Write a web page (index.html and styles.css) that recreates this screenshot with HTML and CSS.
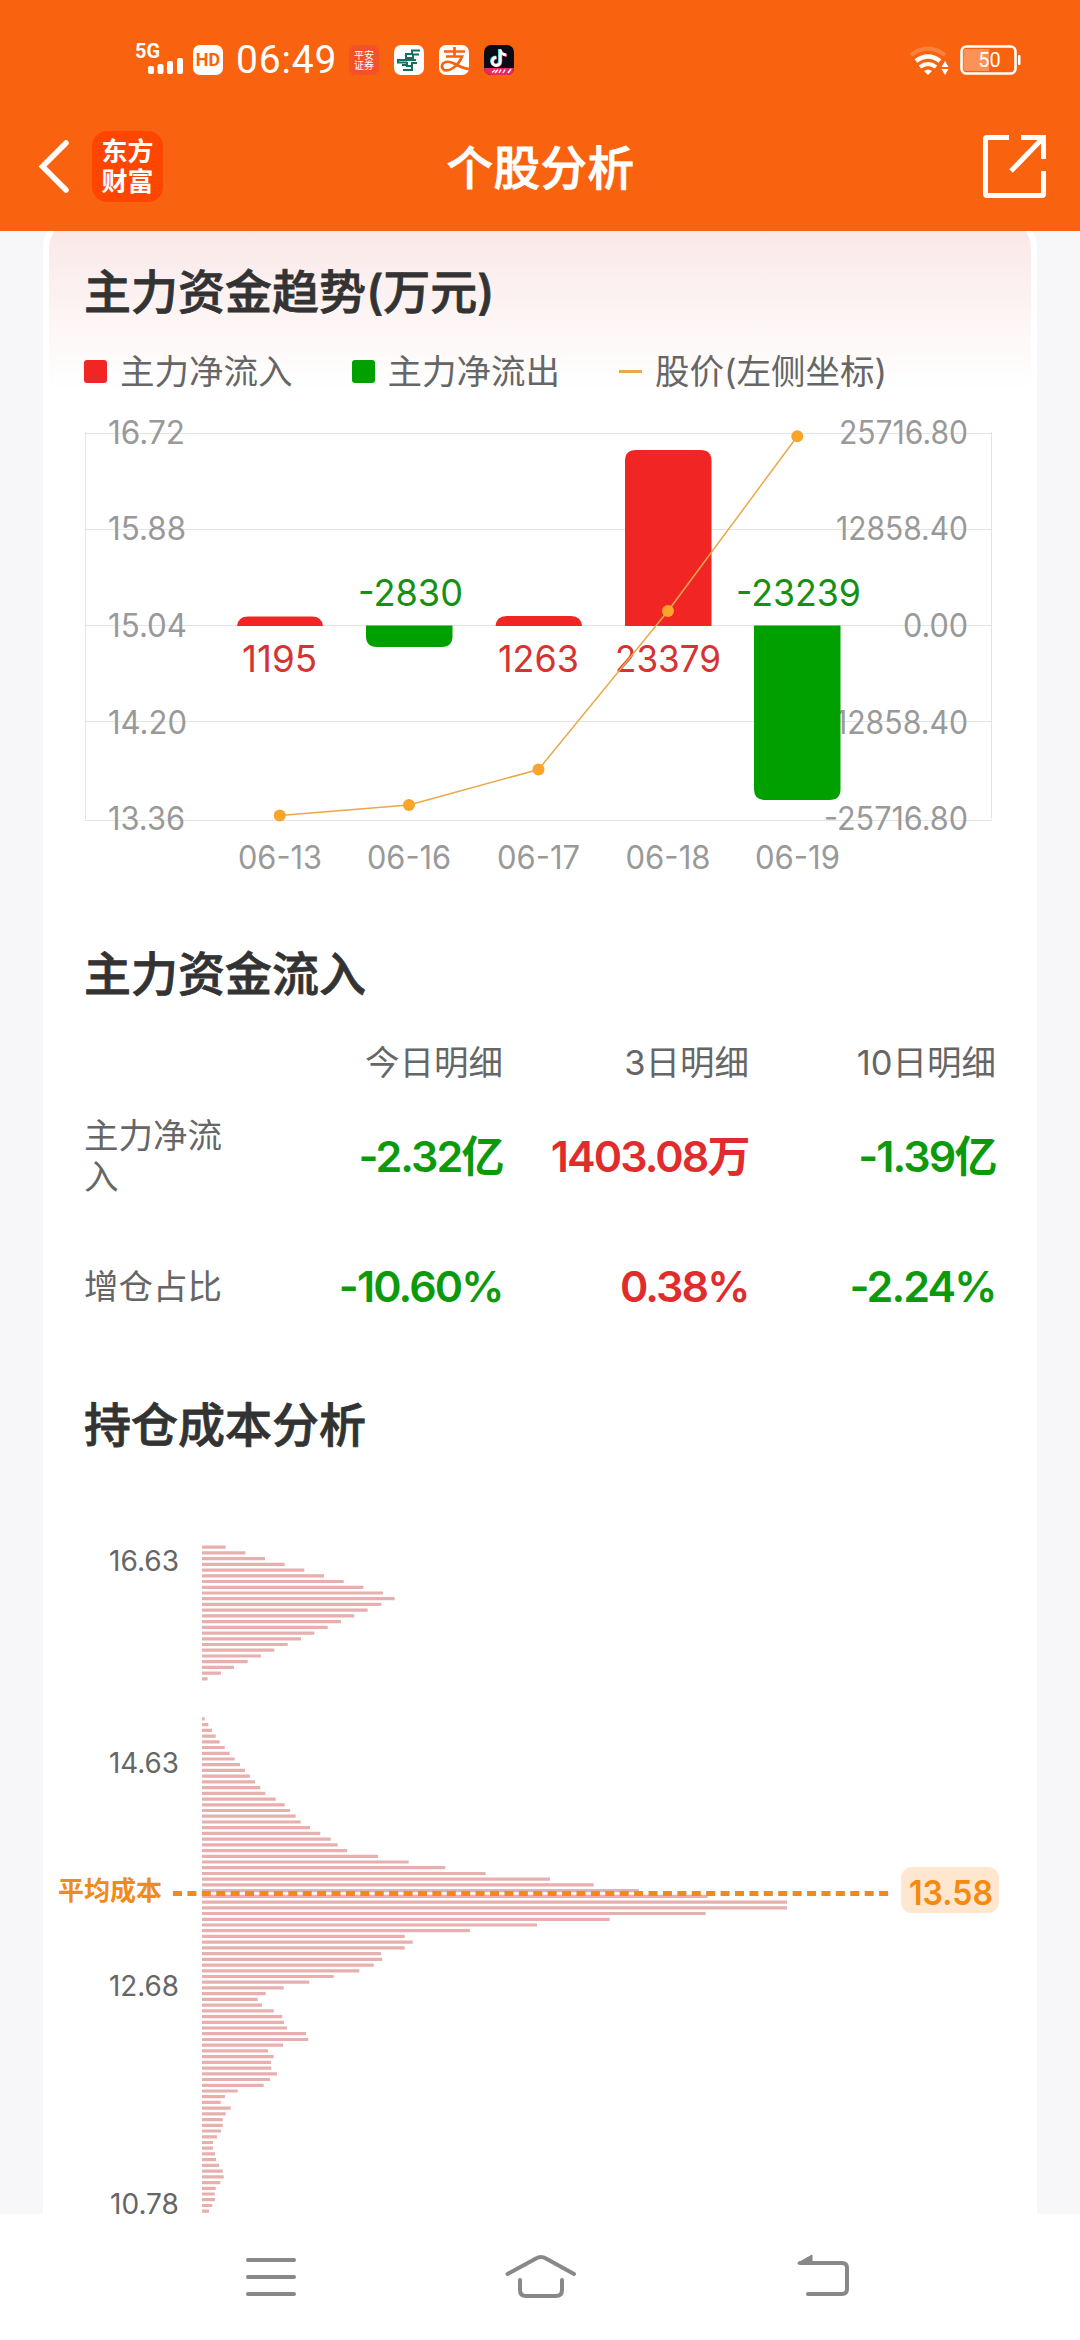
FILE: index.html
```html
<!DOCTYPE html>
<html lang="zh-CN">
<head>
<meta charset="utf-8">
<title>个股分析</title>
<link rel="stylesheet" href="styles.css">
</head>
<body>
<div class="screen">
  <header class="top">
    <div class="status">
      <svg class="signal" width="49" height="38" viewBox="135 40 49 38">
        <text class="net" x="135" y="58" textLength="25" lengthAdjust="spacingAndGlyphs">5G</text>
        <rect x="148" y="66" width="6" height="8" rx="2"/><rect x="157.500" y="64" width="6" height="10" rx="2"/>
        <rect x="167" y="61" width="6" height="13" rx="2"/><rect x="177" y="58" width="6" height="16" rx="2"/>
      </svg>
      <span class="hd">HD</span>
      <span class="clock">06:49</span>
      <span class="app pingan">平安<br>证券</span>
      <svg class="app" viewBox="0 0 30 30">
        <rect width="30" height="30" rx="7" fill="#fff"/>
        <path d="M26 5.500H18V9H12v4M25 9.500h-6V13h-8M22 15H4v2.500h9M23 18h-5v3h-5v-4M13 20H8M18 22v3H9" fill="none" stroke="#14715c" stroke-width="2"/>
      </svg>
      <svg class="app" viewBox="0 0 30 30">
        <rect width="30" height="30" rx="7" fill="#fff"/>
        <path d="M5 6.500H26M15.500 2V11.500M7 11.500H23Q20 19 14 23Q9 26.500 5 25Q1.500 22 4 18.500Q8 15 15 18.500Q23 23 30 24" fill="none" stroke="#f96310" stroke-width="2.700"/>
      </svg>
      <svg class="app" viewBox="0 0 30 30">
        <rect width="30" height="30" rx="7" fill="#0b0b16"/>
        <path d="M0 23H30A7 7 0 0 1 23 30H7A7 7 0 0 1 0 23Z" fill="#e8285e"/>
        <path d="M15.500 4v12a4 4 0 1 1-4-4M15.500 5q1 4 6 4.500" fill="none" stroke="#45d9d5" stroke-width="3"/>
        <path d="M17 5v12a4 4 0 1 1-4-4M17 6q1 4 6 4.500" fill="none" stroke="#f0385f" stroke-width="2.500"/>
        <path d="M16.300 4.500v12a4 4 0 1 1-4-4M16.300 5.500q1 4 6 4.500" fill="none" stroke="#fff" stroke-width="2.800"/>
        <path d="M8 27.500l3-2.500M11 28l3-3.500M15 28l2-3.500M19 28l2-3.500M24 28l3-4" stroke="#fff" stroke-width="1.500"/>
      </svg>
      <svg class="system" width="112" height="32" viewBox="909 44 112 32">
        <g fill="none" stroke="#fff">
          <path d="M911 55Q928 42 945 55" stroke-width="4" opacity=".2"/>
          <path d="M916 61Q928 52 940 61" stroke-width="4.500"/>
          <path d="M920 67Q928 61 936 67" stroke-width="4"/>
          <rect x="961.500" y="46.500" width="54" height="27" rx="5" stroke-width="2.600"/>
        </g>
        <g fill="#fff">
          <path d="M924 71Q928 68 932 71L928 75Z"/><path d="M941.500 67L945 61L948.500 67ZM941.500 69H948.500L945 75Z"/>
          <rect x="1018" y="55" width="2.500" height="10" rx="1"/>
          <path d="M965 49H989V71H965Q963.500 71 963.500 69V51Q963.500 49 965 49Z" opacity=".3"/>
          <text class="level" x="989.500" y="67" text-anchor="middle">50</text>
        </g>
      </svg>
    </div>
    <div class="titlebar">
      <svg class="back" width="30" height="56" viewBox="39 139 30 56"><path d="M66 143L42.500 166.500L66 190" /></svg>
      <span class="logo">东方<br>财富</span>
      <h1>个股分析</h1>
      <svg class="share" width="64" height="64" viewBox="983 134 64 64"><path d="M1009 136.500H987Q985.500 136.500 985.500 138V193Q985.500 194.500 987 194.500H1042Q1043.500 194.500 1043.500 193V170M1021 136.500H1043.500V158M1043 137L1011 170"/></svg>
    </div>
  </header>

  <main class="content">
    <div class="card">
      <div class="card-body">
        <h2 class="first">主力资金趋势(万元)</h2>
        <div class="legend">
          <span class="key"><i class="box in"></i>主力净流入</span>
          <span class="key"><i class="box out"></i>主力净流出</span>
          <span class="key"><i class="dash"></i>股价(左侧坐标)</span>
        </div>
        <svg class="trend" width="912" height="490" viewBox="84 400 912 490">
          <path class="grid" d="M85 433.500H992M85 529.500H992M85 625.500H992M85 721.500H992M85 820.500H992M85.500 432V819M991.500 432V819"/>
          <g class="axis">
            <text x="108" y="444" textLength="77" lengthAdjust="spacingAndGlyphs">16.72</text>
            <text x="108" y="540" textLength="78" lengthAdjust="spacingAndGlyphs">15.88</text>
            <text x="108" y="637" textLength="79" lengthAdjust="spacingAndGlyphs">15.04</text>
            <text x="108" y="733.500" textLength="79" lengthAdjust="spacingAndGlyphs">14.20</text>
            <text x="108" y="830" textLength="77" lengthAdjust="spacingAndGlyphs">13.36</text>
            <text x="839" y="444" textLength="129" lengthAdjust="spacingAndGlyphs">25716.80</text>
            <text x="836" y="540" textLength="132" lengthAdjust="spacingAndGlyphs">12858.40</text>
            <text x="903" y="637" textLength="65" lengthAdjust="spacingAndGlyphs">0.00</text>
            <text x="821" y="733.500" textLength="147" lengthAdjust="spacingAndGlyphs">-12858.40</text>
            <text x="824" y="830" textLength="144" lengthAdjust="spacingAndGlyphs">-25716.80</text>
            <text x="238" y="869" textLength="84" lengthAdjust="spacingAndGlyphs">06-13</text>
            <text x="367" y="869" textLength="84" lengthAdjust="spacingAndGlyphs">06-16</text>
            <text x="497" y="869" textLength="83" lengthAdjust="spacingAndGlyphs">06-17</text>
            <text x="625.500" y="869" textLength="85" lengthAdjust="spacingAndGlyphs">06-18</text>
            <text x="755" y="869" textLength="85" lengthAdjust="spacingAndGlyphs">06-19</text>
          </g>
          <g class="in">
            <path d="M237 626Q238 616.500 248 616.500H312Q322 616.500 323 626Z"/>
            <path d="M495.500 626Q496.500 616 506.500 616H571Q581 616 582 626Z"/>
            <path d="M625 626V461Q625 450 636 450H700.500Q711.500 450 711.500 461V626Z"/>
            <text x="242" y="672" textLength="75" lengthAdjust="spacingAndGlyphs">1195</text>
            <text x="498" y="672" textLength="81" lengthAdjust="spacingAndGlyphs">1263</text>
            <text x="615" y="672" textLength="106" lengthAdjust="spacingAndGlyphs">23379</text>
          </g>
          <g class="out">
            <path d="M366 625.500V636Q366 647 377 647H441.500Q452.500 647 452.500 636V625.500Z"/>
            <path d="M754 625.500V789Q754 800 765 800H829.500Q840.500 800 840.500 789V625.500Z"/>
            <text x="358" y="606" textLength="105" lengthAdjust="spacingAndGlyphs">-2830</text>
            <text x="736" y="606" textLength="125" lengthAdjust="spacingAndGlyphs">-23239</text>
          </g>
          <polyline class="price" points="279.700,815.500 409,805 538.500,769.500 668,611 797.300,436.300"/>
          <g class="dots"><circle cx="279.700" cy="815.500" r="6"/><circle cx="409" cy="805" r="6"/><circle cx="538.500" cy="769.500" r="6"/><circle cx="668" cy="611" r="6"/><circle cx="797.300" cy="436.300" r="6"/></g>
        </svg>

        <h2 class="second">主力资金流入</h2>
        <div class="flows">
          <span></span><span>今日明细</span><span>3日明细</span><span>10日明细</span>
          <span class="name">主力净流入</span><b class="down">-2.32亿</b><b class="up">1403.08万</b><b class="down">-1.39亿</b>
          <span class="name">增仓占比</span><b class="down">-10.60%</b><b class="up">0.38%</b><b class="down">-2.24%</b>
        </div>

        <h2 class="third">持仓成本分析</h2>
        <svg class="cost" width="982" height="714" viewBox="49 1500 982 714">
          <g class="levels">
            <text x="109" y="1571" textLength="70" lengthAdjust="spacingAndGlyphs">16.63</text>
            <text x="109" y="1773" textLength="70" lengthAdjust="spacingAndGlyphs">14.63</text>
            <text x="109" y="1996" textLength="70" lengthAdjust="spacingAndGlyphs">12.68</text>
            <text x="110" y="2214" textLength="69" lengthAdjust="spacingAndGlyphs">10.78</text>
          </g>
          <path id="histogram" class="histogram"/>
          <path class="average" d="M173 1893.500H889"/>
          <text class="average-name" x="58" y="1900">平均成本</text>
          <rect class="badge" x="901" y="1867" width="98" height="46" rx="11"/>
          <text class="average-value" x="909" y="1904.500" textLength="84" lengthAdjust="spacingAndGlyphs">13.58</text>
        </svg>
      </div>
    </div>
  </main>

  <nav class="keys">
    <svg width="54" height="46" viewBox="244 2254 54 46"><path d="M248 2260H294M248 2277H294M248 2294H294"/></svg>
    <svg class="home" width="74" height="46" viewBox="504 2254 74 46"><path d="M507.500 2274L536 2258.500Q541 2255.500 546 2258.500L574 2274M520 2280V2290Q520 2296 526 2296H556Q562 2296 562 2290V2280"/></svg>
    <svg width="54" height="46" viewBox="797 2254 54 46"><path d="M800 2263H842Q847 2263 847 2268V2289Q847 2294 842 2294H808"/><path class="tip" d="M798 2263L812 2255V2264H799Z"/></svg>
  </nav>
</div>
<script src="chart.js"></script>
</body>
</html>
```

FILE: styles.css
```css
* { box-sizing: border-box; margin: 0; padding: 0; }
body { background: #fff; font-family: Inter, "Noto Sans CJK SC", sans-serif; color: #333; }
svg { display: block; flex: none; overflow: visible; }
.screen { width: 1080px; height: 2340px; display: flex; flex-direction: column; overflow: hidden; }

.top { height: 231px; background: #f96310; color: #fff; flex: none; z-index: 1; }
.status { height: 120px; padding: 0 59px 0 135px; display: flex; align-items: center; }
.signal { fill: #fff; margin-top: -2px; }
.net { font: 700 20px Roboto, sans-serif; }
.hd { width: 30px; height: 30px; margin-left: 9px; border-radius: 7px; background: #fff; color: #f96310; font: 700 18px/30px Roboto, sans-serif; text-align: center; }
.clock { width: 103px; margin: 0 10px 0 13px; font: 400 39px/46px Roboto, sans-serif; letter-spacing: 0.800px; }
.app { width: 30px; height: 30px; margin-right: 15px; border-radius: 7px; flex: none; text-align: center; }
.pingan { background: #f4502a; font-size: 10px; line-height: 10px; padding-top: 5px; }
.system { margin-left: auto; }
.level { font: 400 20px Roboto, sans-serif; }
.titlebar { height: 93px; padding: 0 33px 0 39px; display: flex; align-items: center; }
.back, .share { fill: none; stroke: #fff; }
.back { stroke-width: 5.500; stroke-linecap: round; }
.share { stroke-width: 5; }
.logo { width: 71px; height: 71px; margin-left: 23px; padding-top: 6px; border-radius: 15px; background: #ff4600; font-size: 26px; line-height: 29.500px; font-weight: 700; text-align: center; }
.titlebar h1 { flex: 1; padding: 2px 84px 0 19px; text-align: center; font-size: 46.500px; line-height: 60px; font-weight: 500; letter-spacing: 0.500px; -webkit-text-stroke: 0.800px #fff; }

.content { flex: 1; display: flow-root; background: #f7f7fa; min-height: 0; height: 1983px; }
.card { height: 1997px; margin: -14px 43px 0; padding: 6px 6px 0; border-radius: 30px 30px 0 0; background: #fff; }
.card-body { padding: 39px 35px 0; border-radius: 24px 24px 0 0; background: linear-gradient(#fae7e7, #fdf4f4 90px, #fff 168px); }
h2 { height: 60px; line-height: 60px; font-size: 47px; font-weight: 500; -webkit-text-stroke: 0.800px #333; }
.legend { height: 40px; margin-top: 29px; padding-top: 1px; display: flex; align-items: center; gap: 59px; font-size: 34.500px; line-height: 40px; color: #666; }
.key { display: flex; align-items: center; white-space: nowrap; }
.box { width: 23px; height: 23px; margin-right: 13px; border-radius: 3px; }
.box.in { background: #f22525; }
.box.out { background: #00a000; }
.dash { width: 23px; height: 3px; margin-right: 13px; background: #e9a84a; }
.trend { margin-top: 9px; }
.grid { stroke: #e4e4e4; fill: none; }
.axis { fill: #999; font-size: 32px; }
.in, .out { font-size: 37px; }
.trend .in { fill: #f22525; }
.trend .out { fill: #00a000; }
.trend .in text { fill: #d63333; }
.trend .out text { fill: #159015; }
.price { fill: none; stroke: #e9a84a; stroke-width: 1.500; }
.dots { fill: #f9a52b; }

.second { margin-top: 54px; }
.flows { margin-top: 28px; display: grid; grid-template-columns: 172px 247px 246px 247px; grid-template-rows: 60px 128px 132px; align-items: center; text-align: right; font-size: 34.500px; line-height: 41px; color: #666; }
.flows .name { width: 142px; text-align: left; }
.flows b { font-size: 43px; font-weight: 600; line-height: 60px; letter-spacing: -1.900px; margin-right: 0.500px; white-space: nowrap; }
.up { color: #e02c2c; }
.down { color: #0c9a0c; }
.third { margin-top: 43px; }
.cost { margin: 45px -35px 0; }
.levels { fill: #666; font-size: 28px; }
.histogram { fill: none; stroke: #e8afaf; stroke-width: 3.200; }
.average { stroke: #f4881a; stroke-width: 5; stroke-dasharray: 9 5.410; }
.average-name { fill: #f08a1c; font-size: 26px; font-weight: 700; }
.badge { fill: #ffe6cf; }
.average-value { fill: #f6890f; font-size: 34.500px; font-weight: 600; }

.keys { height: 126px; flex: none; padding: 40px 0 0 244px; display: flex; align-items: flex-start; }
.keys svg { fill: none; stroke: #888; stroke-width: 4; stroke-linecap: round; }
.keys .home { margin: 0 219px 0 206px; }
.keys .tip { fill: #888; stroke-width: 1; }
```

FILE: chart.js
```js
// Share of holdings at each price step, top to bottom, in thirds of a pixel.
const shares = [
  71, 130, 189, 248, 307, 366, 425, 484, 543, 578, 538, 497, 457, 417, 377, 337,
  297, 257, 217, 177, 137, 96, 57, 17, 0, 0, 0, 0, 0, 0,
  8, 19, 30, 41, 53, 68, 83, 98, 114, 129, 144, 159, 175, 190, 221,
  248, 264, 281, 296, 324, 355, 386, 407, 435, 528, 620, 730, 851, 1044, 1175,
  1310, 1517, 1755, 1755, 1511, 1223, 1005, 804, 608, 632, 608, 537, 540, 515,
  472, 395, 322, 245, 191, 167, 180, 215, 241, 246, 255, 312, 319, 243, 198,
  215, 207, 208, 225, 204, 185, 107, 69, 56, 86, 71, 62, 62, 57, 45, 33, 33,
  39, 42, 51, 62, 65, 55, 41, 38, 39, 31, 21
];
const left = 202, top0 = 1547.2, step = 5.724;
document.getElementById("histogram").setAttribute("d", shares
  .map((s, i) => s ? `M${left} ${(top0 + i * step).toFixed(1)}h${(s / 3).toFixed(1)}` : "")
  .join(""));
```
